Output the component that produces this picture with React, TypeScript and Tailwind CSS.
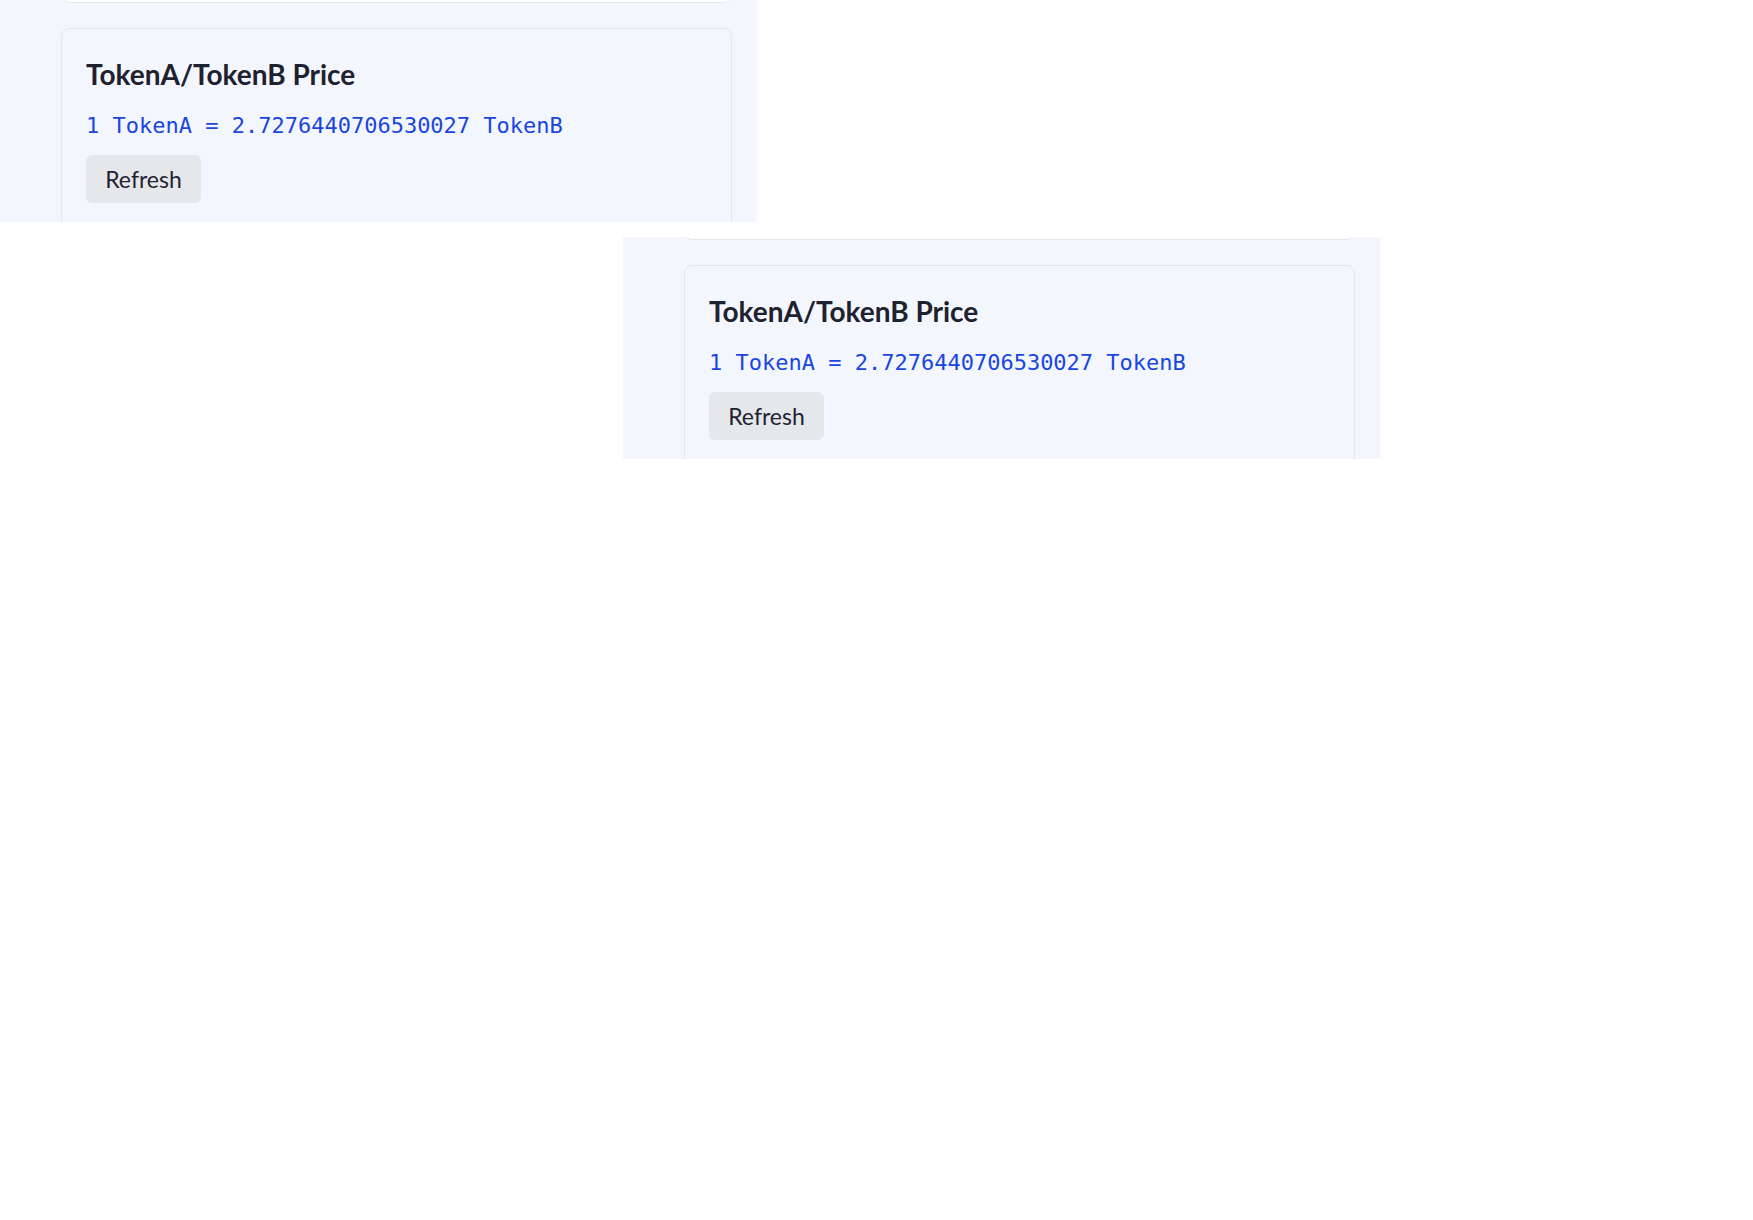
function PriceCard() {
  return (
    <div className="w-[671px] shrink-0 rounded-lg border border-[#e4e7ec] bg-[#f3f7fd] p-6">
      <h2 className="font-['Lato',sans-serif] text-[28px] leading-[42px] font-bold text-[#1e2230]">
        TokenA/TokenB Price
      </h2>
      <p className="mt-[14px] font-['DejaVu_Sans_Mono',monospace] text-[22px] leading-[33px] text-[#1a45e0]">
        1 TokenA = 2.7276440706530027 TokenB
      </p>
      <button className="mt-[13px] h-[48px] w-[115px] rounded-md bg-[#e5e7eb] font-['Lato',sans-serif] text-[23px] text-[#1f2333]">
        Refresh
      </button>
    </div>
  );
}

function Panel() {
  return (
    <div className="flex h-[222px] w-[757px] flex-col overflow-hidden bg-[#f3f7fd] pl-[61px]">
      {/* bottom edge of the card above */}
      <div className="mt-[-97px] h-[100px] w-[671px] shrink-0 rounded-lg border border-[#e4e7ec] bg-white" />
      <div className="mt-[25px]">
        <PriceCard />
      </div>
    </div>
  );
}

export default function App() {
  return (
    <div className="min-h-[1220px] w-full bg-white">
      <Panel />
      <div className="ml-[623px] mt-[15px]">
        <Panel />
      </div>
    </div>
  );
}
